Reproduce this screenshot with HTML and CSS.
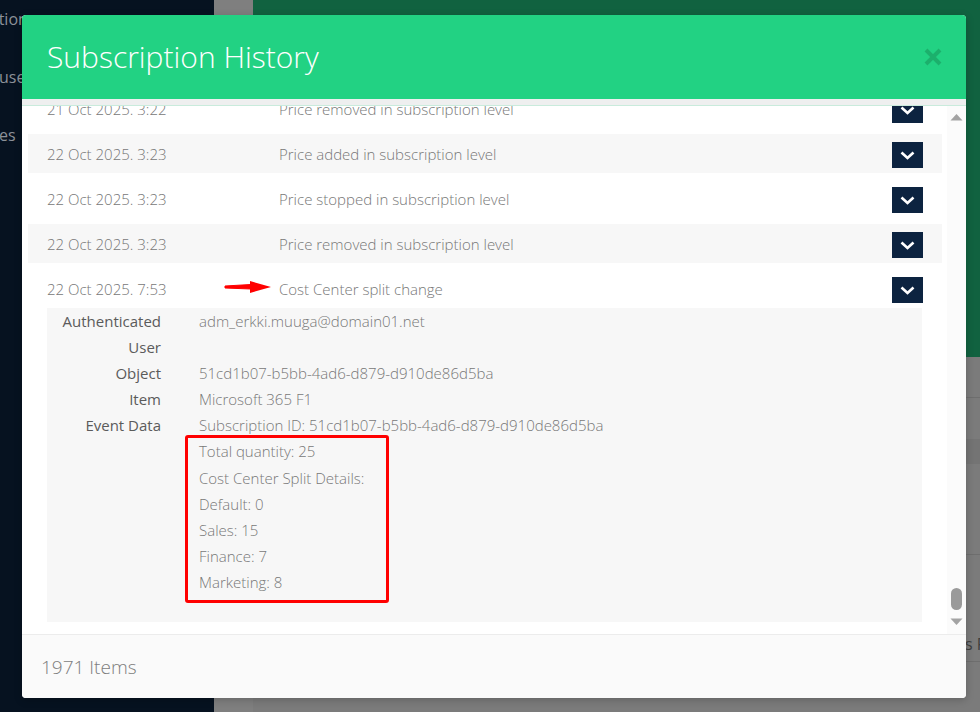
FILE: index.html
```html
<!DOCTYPE html>
<html lang="en">
<head>
<meta charset="utf-8">
<title>Subscription History</title>
<link rel="stylesheet" href="styles.css">
</head>
<body>
<div class="app">
  <aside class="sidebar">
    <div class="nav-item n1">ctions</div>
    <div class="nav-item n2">use</div>
    <div class="nav-item n3">es</div>
  </aside>
  <div class="strip"></div>
  <main class="main">
    <div class="hero"></div>
    <div class="bg-row h40 lined"></div>
    <div class="bg-row h40"></div>
    <div class="bg-row band"></div>
    <div class="bg-row h90 lined"></div>
    <div class="bg-row h106 lined"><span class="bg-text">Items Found</span></div>
  </main>
</div>

<div class="modal">
  <div class="modal-header">
    <h1 class="modal-title">Subscription History</h1>
    <svg class="close" width="18" height="18" viewBox="0 0 18 18"><path d="M2 2 L16 16 M16 2 L2 16" stroke="#1cb06c" stroke-width="4" fill="none"/></svg>
  </div>
  <div class="modal-sep"></div>
  <div class="modal-body">
    <div class="list">
      <div class="item">
        <div class="item-head">
          <span class="date">21 Oct 2025. 3:22</span>
          <span class="desc">Price removed in subscription level</span>
          <span class="btn"><svg width="31" height="26" viewBox="0 0 31 26"><path d="M9.5 10.5 L15.5 16 L21.5 10.5" stroke="#fff" stroke-width="2.6" fill="none"/></svg></span>
        </div>
      </div>
      <div class="item alt">
        <div class="item-head">
          <span class="date">22 Oct 2025. 3:23</span>
          <span class="desc">Price added in subscription level</span>
          <span class="btn"><svg width="31" height="26" viewBox="0 0 31 26"><path d="M9.5 10.5 L15.5 16 L21.5 10.5" stroke="#fff" stroke-width="2.6" fill="none"/></svg></span>
        </div>
      </div>
      <div class="item">
        <div class="item-head">
          <span class="date">22 Oct 2025. 3:23</span>
          <span class="desc">Price stopped in subscription level</span>
          <span class="btn"><svg width="31" height="26" viewBox="0 0 31 26"><path d="M9.5 10.5 L15.5 16 L21.5 10.5" stroke="#fff" stroke-width="2.6" fill="none"/></svg></span>
        </div>
      </div>
      <div class="item alt">
        <div class="item-head">
          <span class="date">22 Oct 2025. 3:23</span>
          <span class="desc">Price removed in subscription level</span>
          <span class="btn"><svg width="31" height="26" viewBox="0 0 31 26"><path d="M9.5 10.5 L15.5 16 L21.5 10.5" stroke="#fff" stroke-width="2.6" fill="none"/></svg></span>
        </div>
      </div>
      <div class="item open">
        <div class="item-head">
          <span class="date">22 Oct 2025. 7:53</span>
          <span class="desc">Cost Center split change</span>
          <span class="btn"><svg width="31" height="26" viewBox="0 0 31 26"><path d="M9.5 10.5 L15.5 16 L21.5 10.5" stroke="#fff" stroke-width="2.6" fill="none"/></svg></span>
        </div>
        <div class="details">
          <div class="dl">Authenticated User</div>
          <div class="dv">adm_erkki.muuga@domain01.net</div>
          <div class="dl">Object</div>
          <div class="dv">51cd1b07-b5bb-4ad6-d879-d910de86d5ba</div>
          <div class="dl">Item</div>
          <div class="dv">Microsoft 365 F1</div>
          <div class="dl">Event Data</div>
          <div class="dv">Subscription ID: 51cd1b07-b5bb-4ad6-d879-d910de86d5ba<br>Total quantity: 25<br>Cost Center Split Details:<br>Default: 0<br>Sales: 15<br>Finance: 7<br>Marketing: 8</div>
        </div>
      </div>
    </div>
    <div class="scrollbar">
      <svg class="sb-arrow" width="19" height="8" viewBox="0 0 19 8"><path d="M3.5 7.5 L9.5 1 L15.5 7.5 Z" fill="#a3a3a3"/></svg>
      <div class="sb-bottom">
        <div class="sb-thumb"></div>
        <svg class="sb-arrow" width="19" height="8" viewBox="0 0 19 8"><path d="M3.5 0.5 L9.5 7 L15.5 0.5 Z" fill="#a3a3a3"/></svg>
      </div>
    </div>
  </div>
  <div class="modal-footer">1971 Items</div>
</div>

<div class="annot-box"></div>
<svg class="annot-arrow" width="50" height="16" viewBox="0 0 50 16">
  <path d="M1 7 L27 5.5 L27 10 L1 9 Z" fill="#f00" stroke="#f00" stroke-width="1" stroke-linejoin="round"/>
  <path d="M26 2 L47 8 L26 14 Z" fill="#f00"/>
</svg>
</body>
</html>
```

FILE: styles.css
```css
* { box-sizing: border-box; }
html, body { margin: 0; padding: 0; }
body {
  width: 980px;
  height: 712px;
  overflow: hidden;
  position: relative;
  font-family: "Open Sans", "Noto Sans", "Liberation Sans", sans-serif;
  background: #7b7b7b;
}

.app {
  display: flex;
  height: 712px;
}
.sidebar {
  flex: none;
  width: 214px;
  background: #061220;
  display: flex;
  flex-direction: column;
  overflow: hidden;
  padding-top: 7px;
}
.nav-item {
  color: #8c9198;
  font-size: 16px;
  line-height: 24px;
  white-space: nowrap;
}
.n1 { margin-left: -9px; }
.n2 { margin-left: -1px; margin-top: 34px; }
.n3 { margin-left: -1px; margin-top: 34px; }

.strip {
  flex: none;
  width: 39px;
  background: #7f7f7f;
}
.main {
  flex: 1;
  min-width: 0;
  overflow: hidden;
  display: flex;
  flex-direction: column;
  background: #7b7b7b;
}
.hero {
  height: 357px;
  flex: none;
  background: #116240;
}
.bg-row { flex: none; }
.h40 { height: 41px; }
.lined { border-bottom: 1px solid #6e6e6e; }
.band { height: 25px; background: #747474; }
.h90 { height: 91px; }
.h106 { height: 107px; display: flex; align-items: flex-end; padding-bottom: 6px; }
.bg-text {
  margin-left: 678px;
  font-size: 16px;
  color: #3e3e3e;
  white-space: nowrap;
  line-height: 22px;
}

/* modal */
.modal {
  position: absolute;
  left: 22px;
  top: 15px;
  width: 944px;
  height: 683px;
  background: #fff;
  border-radius: 4px;
  overflow: hidden;
  display: flex;
  flex-direction: column;
  box-shadow: 0 2px 8px rgba(0,0,0,0.2);
}
.modal-header {
  height: 84px;
  flex: none;
  background: #22d283;
  display: flex;
  align-items: center;
  justify-content: space-between;
  padding: 0 24px 0 25px;
}
.modal-title {
  margin: 0;
  font-size: 30px;
  font-weight: 300;
  color: #fff;
  line-height: 40px;
  padding-bottom: 1px;
}
.close { display: block; margin-top: 0; }
.modal-sep {
  height: 7px;
  flex: none;
  background: #eeefef;
  border-bottom: 1px solid #c9ebdc;
}
.modal-body {
  height: 528px;
  flex: none;
  display: flex;
  overflow: hidden;
}
.list {
  flex: 1;
  margin-top: -17px;
  padding: 0 5px 0 6px;
}
.item { margin-bottom: 6px; }
.item-head {
  display: grid;
  grid-template-columns: 232px 1fr 31px;
  height: 39px;
  padding: 8px 19px 5px 19px;
  align-items: start;
}
.item.alt .item-head { background: #f7f7f7; }
.date, .desc {
  font-size: 15px;
  font-weight: 300;
  line-height: 25px;
  color: #777;
  white-space: nowrap;
}
.btn {
  width: 31px;
  height: 26px;
  background: #0c2340;
  display: block;
}
.btn svg { display: block; }

.details {
  margin: 0 20px 0 19px;
  background: #f7f7f7;
  display: grid;
  grid-template-columns: 114px 1fr;
  column-gap: 38px;
  padding: 0 0 27px 0;
  font-size: 15px;
  line-height: 26.1px;
}
.dl {
  text-align: right;
  color: #5b5b5b;
  font-weight: 400;
}
.dv { color: #777; font-weight: 300; }

.scrollbar {
  width: 19px;
  flex: none;
  background: #fbfbfb;
  display: flex;
  flex-direction: column;
  justify-content: space-between;
  padding: 7px 0 8px 0;
}
.sb-arrow { display: block; }
.sb-bottom {
  display: flex;
  flex-direction: column;
  align-items: center;
  gap: 8px;
}
.sb-thumb {
  width: 11px;
  height: 22px;
  border-radius: 6px;
  background: #9a9a9a;
}

.modal-footer {
  height: 64px;
  flex: none;
  background: #fafafa;
  border-top: 1px solid #ececec;
  display: flex;
  align-items: center;
  padding-left: 19px;
  font-size: 19px;
  font-weight: 300;
  color: #7d7d7d;
}

/* annotations */
.annot-box {
  position: absolute;
  left: 185px;
  top: 435px;
  width: 204px;
  height: 168px;
  border: 3px solid #ff0000;
  border-radius: 3px;
}
.annot-arrow {
  position: absolute;
  left: 224px;
  top: 279px;
}
```
